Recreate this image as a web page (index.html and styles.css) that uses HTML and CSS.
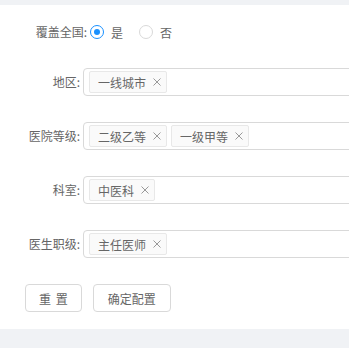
FILE: index.html
```html
<!DOCTYPE html>
<html lang="zh-CN">
<head>
<meta charset="utf-8">
<link rel="stylesheet" href="styles.css">
</head>
<body>
<div class="card">
  <form class="form">
    <div class="row row-radio">
      <span class="label label-wide">覆盖全国:</span>
      <label class="radio"><span class="radio-circle checked"></span><span class="radio-text">是</span></label>
      <label class="radio"><span class="radio-circle"></span><span class="radio-text">否</span></label>
    </div>
    <div class="row">
      <span class="label">地区:</span>
      <div class="select">
        <span class="tag">一线城市<svg class="close" viewBox="0 0 8 8"><path d="M0.5 0.5L7.5 7.5M7.5 0.5L0.5 7.5"/></svg></span>
      </div>
    </div>
    <div class="row">
      <span class="label">医院等级:</span>
      <div class="select">
        <span class="tag">二级乙等<svg class="close" viewBox="0 0 8 8"><path d="M0.5 0.5L7.5 7.5M7.5 0.5L0.5 7.5"/></svg></span>
        <span class="tag">一级甲等<svg class="close" viewBox="0 0 8 8"><path d="M0.5 0.5L7.5 7.5M7.5 0.5L0.5 7.5"/></svg></span>
      </div>
    </div>
    <div class="row">
      <span class="label">科室:</span>
      <div class="select">
        <span class="tag">中医科<svg class="close" viewBox="0 0 8 8"><path d="M0.5 0.5L7.5 7.5M7.5 0.5L0.5 7.5"/></svg></span>
      </div>
    </div>
    <div class="row">
      <span class="label">医生职级:</span>
      <div class="select">
        <span class="tag">主任医师<svg class="close" viewBox="0 0 8 8"><path d="M0.5 0.5L7.5 7.5M7.5 0.5L0.5 7.5"/></svg></span>
      </div>
    </div>
    <div class="row row-buttons">
      <button type="button" class="btn btn-spaced">重 置</button>
      <button type="button" class="btn">确定配置</button>
    </div>
  </form>
</div>
</body>
</html>
```
FILE: styles.css
```css
html, body {
  margin: 0;
  padding: 0;
}
body {
  background: #f0f2f5;
  padding-top: 5px;
  font-family: "Noto Sans CJK SC", "Noto Sans", sans-serif;
  font-size: 12px;
  color: #666;
  overflow: hidden;
}
.card {
  background: #fff;
  height: 324px;
  box-sizing: border-box;
  padding: 17px 0 17px 0;
  overflow: hidden;
}
.form {
  display: flex;
  flex-direction: column;
  gap: 26px;
}
.row {
  display: flex;
  align-items: center;
  height: 28px;
}
.row-radio {
  height: 20px;
}
.label {
  width: 80px;
  flex: none;
  text-align: right;
  color: #666;
  line-height: 20px;
  white-space: nowrap;
}
.label-wide {
  width: 87px;
}
.radio {
  display: flex;
  align-items: center;
  margin-left: 3px;
  margin-right: 8px;
}
.radio + .radio {
  margin-left: 0;
}
.radio-circle {
  width: 14px;
  height: 14px;
  box-sizing: border-box;
  border: 1px solid #d9d9d9;
  border-radius: 50%;
  position: relative;
  background: #fff;
}
.radio-circle.checked {
  border-color: #1890ff;
}
.radio-circle.checked::after {
  content: "";
  position: absolute;
  left: 3px;
  top: 3px;
  width: 6px;
  height: 6px;
  border-radius: 50%;
  background: #1890ff;
}
.radio-text {
  padding: 0 8px 0 7px;
  color: #666;
}
.select {
  flex: 1;
  margin-left: 3px;
  margin-right: -6px;
  height: 28px;
  box-sizing: border-box;
  border: 1px solid #d9d9d9;
  border-radius: 4px;
  display: flex;
  align-items: center;
  padding-left: 5px;
  gap: 4px;
}
.tag {
  display: inline-flex;
  align-items: center;
  height: 22px;
  box-sizing: border-box;
  border: 1px solid #e8e8e8;
  background: #fafafa;
  border-radius: 2px;
  padding: 0 5px 0 8px;
  color: #666;
  white-space: nowrap;
}
.close {
  width: 8px;
  height: 8px;
  margin-left: 7px;
  fill: none;
  stroke: #999;
  stroke-width: 1;
}
.row-buttons {
  padding-left: 25px;
  gap: 11px;
}
.btn {
  height: 28px;
  padding: 0 14px;
  border: 1px solid #d9d9d9;
  border-radius: 4px;
  background: #fff;
  font-family: "Noto Sans CJK SC", "Noto Sans", sans-serif;
  font-size: 12px;
  color: #666;
  cursor: pointer;
}
.btn-spaced {
  word-spacing: 2px;
  padding: 0 13px;
}
```
